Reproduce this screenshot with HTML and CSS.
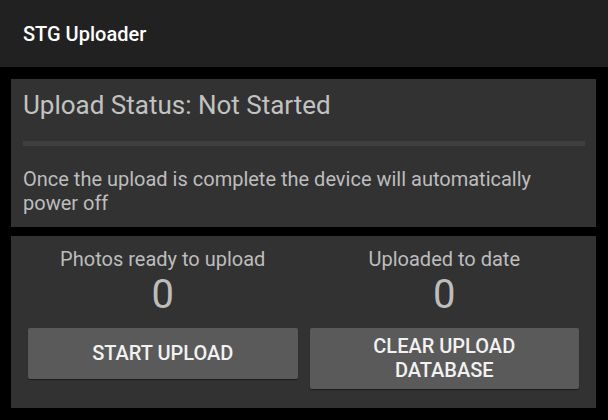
FILE: index.html
```html
<!DOCTYPE html>
<html>
<head>
<meta charset="utf-8">
<link rel="stylesheet" href="styles.css">
</head>
<body>
<header class="appbar">STG Uploader</header>
<main class="content">
  <section class="card status-card">
    <h1 class="status-title">Upload Status: Not Started</h1>
    <div class="progress"><div class="progress-fill" style="width:0%"></div></div>
    <p class="status-note">Once the upload is complete the device will automatically power off</p>
  </section>
  <section class="card counts-card">
    <div class="count-col">
      <div class="count-label">Photos ready to upload</div>
      <div class="count-value">0</div>
      <button class="btn">START UPLOAD</button>
    </div>
    <div class="count-col">
      <div class="count-label">Uploaded to date</div>
      <div class="count-value">0</div>
      <button class="btn">CLEAR UPLOAD<br>DATABASE</button>
    </div>
  </section>
</main>
</body>
</html>
```
FILE: styles.css
```css
* { box-sizing: border-box; }
html, body { margin: 0; padding: 0; }
body {
  background: #000;
  font-family: Roboto, "Noto Sans", sans-serif;
  width: 608px;
  height: 420px;
  overflow: hidden;
}
.appbar {
  height: 67px;
  background: #212121;
  color: #fff;
  font-size: 20px;
  font-weight: 500;
  display: flex;
  align-items: center;
  padding-left: 23px;
}
.content {
  padding: 12px 12px 0 11px;
  display: flex;
  flex-direction: column;
  gap: 9px;
}
.card {
  background: #323232;
}
.status-card {
  height: 148px;
  padding: 11px 11px 0 12px;
}
.status-title {
  margin: 0;
  font-size: 26px;
  line-height: 30px;
  font-weight: 400;
  color: #c2c2c2;
}
.progress {
  margin-top: 21px;
  height: 5px;
  background: #3f3f3f;
}
.progress-fill { height: 100%; background: #33b5e5; }
.status-note {
  margin: 21px 0 0;
  font-size: 20px;
  line-height: 24px;
  color: #bdbdbd;
}
.counts-card {
  height: 172px;
  padding: 11px 17px 0;
  display: grid;
  grid-template-columns: 1fr 1fr;
  column-gap: 12px;
  align-items: start;
}
.count-col {
  display: flex;
  flex-direction: column;
  align-items: stretch;
  text-align: center;
}
.count-label {
  font-size: 20px;
  line-height: 24px;
  color: #bdbdbd;
}
.count-value {
  margin-top: 2px;
  font-size: 40px;
  line-height: 44px;
  color: #bdbdbd;
}
.btn {
  margin-top: 11px;
  min-height: 51px;
  padding: 6px 8px 7px;
  border: 0;
  border-radius: 2px;
  background: #5a5a5a;
  color: #f2f2f2;
  font-family: Roboto, sans-serif;
  font-size: 20px;
  font-weight: 500;
  line-height: 24px;
  box-shadow: 0 1px 1px rgba(0,0,0,0.45);
}
```
